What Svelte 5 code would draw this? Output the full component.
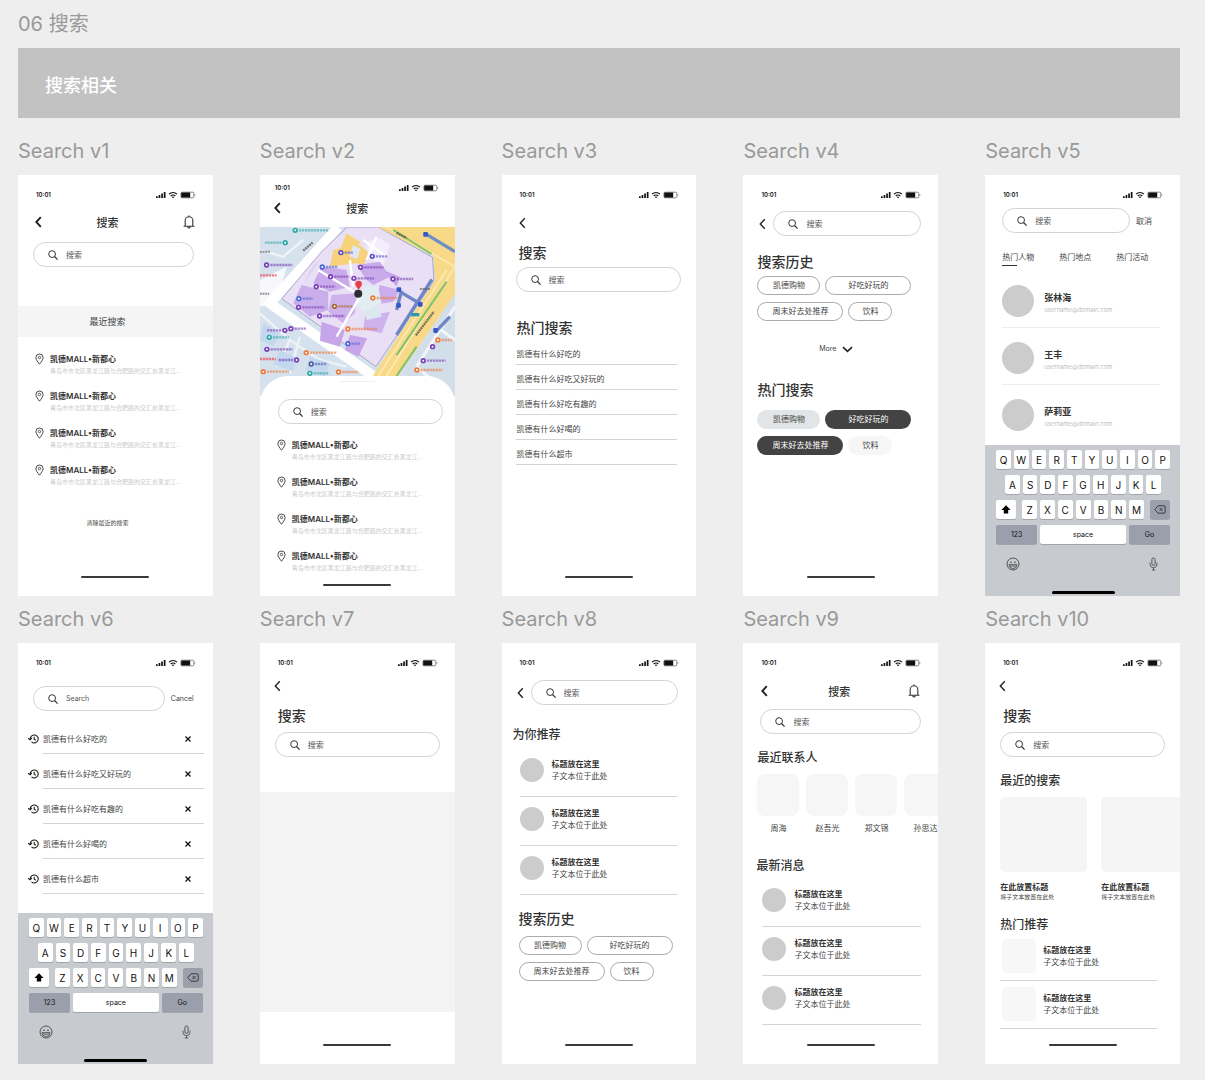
<script>
  const places = Array(4).fill({
    name: '凯德MALL•新都心',
    address: '青岛市市北区黑龙江路与合肥路的交汇处黑龙江...'
  });

  const hot = [
    '凯德有什么好吃的',
    '凯德有什么好吃又好玩的',
    '凯德有什么好吃有趣的',
    '凯德有什么好喝的',
    '凯德有什么超市'
  ];

  const tags = [
    { label: '凯德购物', size: 'mid', tone: 'grey' },
    { label: '好吃好玩的', size: 'wide', tone: 'dark' },
    { label: '周末好去处推荐', size: 'wide', tone: 'dark' },
    { label: '饮料', size: 'small', tone: 'light' }
  ];

  const people = ['张林海', '王丰', '萨莉亚'];
  const contacts = ['周海', '赵吾光', '郑文锦', '孙思达'];
  const tabs = ['热门人物', '热门地点', '热门活动'];
  const keyRows = ['QWERTYUIOP', 'ASDFGHJKL', 'ZXCVBNM'].map((row) => row.split(''));

  const purple = '#7a3fb5';
  const blue = '#4668d0';
  const orange = '#ee7a3a';
  const teal = '#2ba7a5';

  // map markers: x, y, colour, label length
  const pois = [
    [136, 181, teal, 90], [106, 218, teal, -50], [50, 285, purple, 66], [273, 248, '#5a50c8', 26],
    [367, 259, '#5a50c8', 34], [217, 291, blue, 34], [332, 292, purple, 58], [242, 320, purple, 46],
    [312, 325, purple, 50], [429, 327, purple, 50], [199, 350, purple, 46], [147, 386, blue, 30],
    [369, 384, orange, 64], [146, 412, purple, 66], [254, 409, '#a8651f', 44], [209, 438, purple, 64],
    [105, 481, purple, -44], [123, 476, purple, 36], [294, 477, orange, 76], [58, 502, teal, 48],
    [294, 521, blue, 26], [51, 538, purple, 66], [169, 548, orange, 80], [140, 570, purple, -44],
    [184, 582, '#4c5da8', 36], [40, 605, orange, 66], [180, 610, teal, 46], [266, 606, orange, 48],
    [564, 510, orange, 32], [548, 530, purple, 0], [520, 572, purple, 56], [501, 600, orange, 66]
  ];

  let tab = $state(0);
</script>

{#snippet status()}
  <div class="status">
    <span>10:01</span>
    <svg width="40" height="8" viewBox="0 0 40 8">
      <path d="M0 5.2h1.7V7H0zM2.6 4h1.7v3H2.6zM5.2 2.6h1.7V7H5.2zM7.8 1h1.7v6H7.8z" fill="#111" />
      <path d="M13 3.2a5.6 5.6 0 0 1 8 0M14.7 5a3.2 3.2 0 0 1 4.6 0" fill="none" stroke="#111" stroke-width="1.2" />
      <path d="M15.8 6 17 7.3 18.2 6a1.8 1.8 0 0 0-2.4 0z" fill="#111" />
      <rect x="24.9" y="1.2" width="12.9" height="5.6" rx="1.2" fill="none" stroke="#555" stroke-width=".7" />
      <rect x="25.2" y="1.5" width="9" height="5" rx=".6" fill="#111" />
      <path d="M38.6 3v2a1.2 1.2 0 0 0 0-2z" fill="#555" />
    </svg>
  </div>
{/snippet}

{#snippet back(bold = false)}
  <button class="icon-btn" aria-label="返回">
    <svg width="7" height="12" viewBox="0 0 7 12">
      <path d="M5.8 1.2 1.3 6l4.5 4.8" fill="none" stroke="#222" stroke-width={bold ? 1.9 : 1.4} />
    </svg>
  </button>
{/snippet}

{#snippet bell()}
  <button class="icon-btn" aria-label="通知">
    <svg width="12" height="14" viewBox="0 0 12 14">
      <path d="M1 11.2h10M2.2 11V5.6a3.8 3.8 0 0 1 7.6 0V11M4.9 12.2a1.2 1.2 0 0 0 2.2 0M6 .8v1" fill="none" stroke="#333" stroke-width="1.1" stroke-linecap="round" />
    </svg>
  </button>
{/snippet}

{#snippet search(text = '搜索')}
  <label class="search">
    <svg width="10" height="10" viewBox="0 0 10 10">
      <circle cx="4.1" cy="4.1" r="3.4" fill="none" stroke="#333" stroke-width="1" />
      <path d="M6.5 6.5 9.6 9.6" stroke="#333" stroke-width="1.2" />
    </svg>
    <input type="text" placeholder={text} aria-label={text} />
  </label>
{/snippet}

{#snippet placeList()}
  <ul class="places">
    {#each places as place}
      <li>
        <svg width="9" height="12" viewBox="0 0 9 12">
          <path d="M4.5 11.2C3 9 .9 6.8.9 4.6a3.6 3.6 0 0 1 7.2 0c0 2.2-2.1 4.4-3.6 6.6z" fill="none" stroke="#333" stroke-width=".9" />
          <circle cx="4.5" cy="4.5" r="1.2" fill="none" stroke="#333" stroke-width=".8" />
        </svg>
        <div>
          <strong>{place.name}</strong>
          <small>{place.address}</small>
        </div>
      </li>
    {/each}
  </ul>
{/snippet}

{#snippet chips(filled = false)}
  <div class="chips">
    {#each tags as tag}
      <button class="chip {tag.size} {filled ? tag.tone : 'outline'}">{tag.label}</button>
    {/each}
  </div>
{/snippet}

{#snippet messages()}
  <ul class="messages">
    {#each Array(3) as _}
      <li>
        <span class="avatar"></span>
        <div>
          <strong>标题放在这里</strong>
          <span>子文本位于此处</span>
        </div>
      </li>
    {/each}
  </ul>
{/snippet}

{#snippet keyboard()}
  <div class="keyboard">
    <div class="keys">
      {#each keyRows[0] as key}<button class="key">{key}</button>{/each}
    </div>
    <div class="keys inset">
      {#each keyRows[1] as key}<button class="key">{key}</button>{/each}
    </div>
    <div class="keys third">
      <button class="key side" aria-label="Shift">
        <svg width="10" height="9" viewBox="0 0 10 9"><path d="M5 .3 9.6 4.9H7.2V8.4H2.8V4.9H.4z" fill="#000" /></svg>
      </button>
      <div class="keys middle">
        {#each keyRows[2] as key}<button class="key">{key}</button>{/each}
      </div>
      <button class="key side grey" aria-label="Delete">
        <svg width="12" height="9" viewBox="0 0 12 9">
          <path d="M4 .8h6a1.2 1.2 0 0 1 1.2 1.2v5A1.2 1.2 0 0 1 10 8.2H4L.8 4.5zM5.5 3l3 3M8.5 3l-3 3" fill="none" stroke="#333" stroke-width=".9" />
        </svg>
      </button>
    </div>
    <div class="keys bottom">
      <button class="key grey">123</button>
      <button class="key space">space</button>
      <button class="key grey">Go</button>
    </div>
    <div class="tools">
      <button class="icon-btn" aria-label="Emoji">
        <svg width="14" height="14" viewBox="0 0 14 14">
          <circle cx="7" cy="7" r="6" fill="none" stroke="#444" stroke-width=".9" />
          <circle cx="5" cy="5.2" r=".8" fill="#444" />
          <circle cx="9" cy="5.2" r=".8" fill="#444" />
          <path d="M3 7.6h8a4 4 0 0 1-8 0zM3.6 9.1h6.8" fill="none" stroke="#444" stroke-width=".8" />
        </svg>
      </button>
      <button class="icon-btn" aria-label="Dictate">
        <svg width="9" height="14" viewBox="0 0 9 14">
          <rect x="2.9" y="1" width="3.2" height="7.4" rx="1.6" fill="none" stroke="#444" stroke-width=".9" />
          <path d="M1 5.6v1.6a3.5 3.5 0 0 0 7 0V5.6M4.5 10.8V13M2.8 13h3.4" fill="none" stroke="#444" stroke-width=".8" />
        </svg>
      </button>
    </div>
    <div class="home"></div>
  </div>
{/snippet}

<main>
  <h1>06 搜索</h1>
  <div class="banner">搜索相关</div>

  <div class="board">
    <section>
      <h2>Search v1</h2>
      <div class="screen v1">
        {@render status()}
        <div class="nav">{@render back(true)}<h3>搜索</h3>{@render bell()}</div>
        {@render search()}
        <div class="band">最近搜索</div>
        {@render placeList()}
        <button class="clear">清除最近的搜索</button>
        <div class="home"></div>
      </div>
    </section>

    <section>
      <h2>Search v2</h2>
      <div class="screen v2">
        {@render status()}
        <div class="nav">{@render back(true)}<h3>搜索</h3><span></span></div>
        <svg class="map" viewBox="30 171 585 507" preserveAspectRatio="xMidYMid slice">
          <rect x="30" y="171" width="585" height="507" fill="#d5e2ee" />
          <path d="M30 240l70 20 60-50M30 430l90 80-40 80M150 500l-30 110M120 510l90 60 80 20" fill="none" stroke="#eef3f7" stroke-width="7" />
          <path d="M40 460l50 30-20 40-40-20zM180 560l60 20-14 40-60-20zM90 540l50 24-10 40-60-20z" fill="#c3d8ee" />
          <path d="M30 330 110 290 80 400 30 410z" fill="#f6f8fb" />
          <path d="M265 171 60 400 380 625" fill="none" stroke="#fff" stroke-width="30" />
          <path d="M292 171H385L548 262 552 332 378 590 96 386 215 245z" fill="#eae0f6" stroke="#8d86b5" stroke-width="2" />
          <path d="M180 300 215 262 160 345z" fill="#dfd0f2" />
          <path d="M385 171H615V372L445 618 440 678H340L372 612 556 330 550 258z" fill="#f8d988" />
          <path d="M615 372 450 622 440 678H615z" fill="#d2deea" />
          <path d="M615 410 500 590M560 470l55 40M500 590l70 60" stroke="#f3f6f9" stroke-width="9" fill="none" />
          <path d="M290 190 330 215 318 280 240 290 250 240 272 235z" fill="#f7d27a" />
          <path d="M330 225l28 24-18 40-36-18z" fill="#f7d27a" />
          <path d="M310 225l22 12-10 30-24-8z" fill="#dfe6f6" />
          <path d="M350 215l40-10 30 20-20 60-45-20z" fill="#f3eefb" />
          <path d="M215 290 290 300 300 350 240 365 190 340zM320 285 390 275 420 320 370 345 350 330z" fill="#c9aaea" />
          <path d="M155 345 235 365 235 420 180 440 130 400zM390 345 450 360 430 395 370 405z" fill="#caaeec" />
          <path d="M245 375 320 370 315 430 280 460 235 425zM345 440 420 425 395 490 340 478z" fill="#ceb2ee" />
          <path d="M215 455 285 480 270 530 210 512zM300 495 352 505 325 560 285 540zM400 300 450 320 440 350z" fill="#c6a6e8" />
          <path d="M345 345 385 350 395 400 340 425 320 400z" fill="#e2edf3" />
          <path d="M345 420 385 410 395 440 350 450z" fill="#dbe8f0" />
          <path d="M205 300 320 370M300 270 310 350M330 380 260 500M340 210l70 50M380 200l-30 70" fill="none" stroke="#fff" stroke-width="7" />
          <path d="M410 171 615 290M410 618 615 290M385 618 590 300" fill="none" stroke="#fbe9b8" stroke-width="5" />
          <path d="M430 180 545 252M590 335 440 555M500 530 440 618" fill="none" stroke="#7cc36a" stroke-width="6" />
          <path d="M525 190 615 245" stroke="#6d8fc4" stroke-width="10" />
          <path d="M546 328 440 495M450 365 512 402M455 362 440 420M555 488 600 440" fill="none" stroke="#6f86c6" stroke-width="10" />
          <path d="M160 242 188 218M498 496 552 425M440 188l30 16" stroke="#444" stroke-width="7" stroke-dasharray="6 2" opacity=".7" />
          <path d="M30 316h50M30 567h48" stroke="#e8505a" stroke-width="7" stroke-dasharray="7 2" opacity=".7" />
          <path d="M30 371h28M30 245h32M510 357h30" stroke="#555" stroke-width="6" stroke-dasharray="6 2" opacity=".6" />
          <path d="M484 434h24" stroke="#2b9aa8" stroke-width="10" />
          {#each [[527, 193], [447, 359], [446, 406], [511, 403], [557, 481]] as [x, y]}
            <rect x={x - 7} y={y - 7} width="14" height="14" rx="3" fill="#3558c4" />
          {/each}
          {#each pois as [x, y, color, length]}
            <path d="M{x + Math.sign(length) * 11} {y}h{length}" stroke={color} stroke-width="7" stroke-dasharray="7 2" opacity=".6" />
            <circle cx={x} cy={y} r="8" fill={color} />
            <circle cx={x} cy={y} r="3" fill="#fff" />
          {/each}
          <path d="M326 360c-4-8-10-11-10-18a10 10 0 0 1 20 0c0 7-6 10-10 18z" fill="#e8404a" />
          <circle cx="325" cy="371" r="12" fill="#2e2b33" />
        </svg>
        <div class="sheet">
          <div class="handle"></div>
          {@render search()}
          {@render placeList()}
        </div>
        <div class="home"></div>
      </div>
    </section>

    <section>
      <h2>Search v3</h2>
      <div class="screen v3">
        {@render status()}
        <div class="nav">{@render back()}</div>
        <h3 class="big">搜索</h3>
        {@render search()}
        <h3 class="big hot-title">热门搜索</h3>
        <ul class="hot">
          {#each hot as item}
            <li>{item}</li>
          {/each}
        </ul>
        <div class="home"></div>
      </div>
    </section>

    <section>
      <h2>Search v4</h2>
      <div class="screen v4">
        {@render status()}
        <div class="search-row">{@render back()}{@render search()}</div>
        <h3 class="big">搜索历史</h3>
        {@render chips()}
        <button class="more">
          More
          <svg width="11" height="7" viewBox="0 0 11 7"><path d="M1 1.2 5.5 5.4 10 1.2" fill="none" stroke="#222" stroke-width="1.6" /></svg>
        </button>
        <h3 class="big hot-title">热门搜索</h3>
        {@render chips(true)}
        <div class="home"></div>
      </div>
    </section>

    <section>
      <h2>Search v5</h2>
      <div class="screen v5">
        {@render status()}
        <div class="search-row">{@render search()}<button class="cancel">取消</button></div>
        <div class="tabs">
          {#each tabs as label, i}
            <button class:active={tab === i} onclick={() => (tab = i)}>{label}</button>
          {/each}
        </div>
        <ul class="people">
          {#each people as person}
            <li>
              <span class="avatar large"></span>
              <div>
                <strong>{person}</strong>
                <small>username@domain.com</small>
              </div>
            </li>
          {/each}
        </ul>
        {@render keyboard()}
      </div>
    </section>

    <section>
      <h2>Search v6</h2>
      <div class="screen v6">
        {@render status()}
        <div class="search-row">{@render search('Search')}<button class="cancel">Cancel</button></div>
        <ul class="recent">
          {#each hot as item}
            <li>
              <svg width="11" height="10" viewBox="0 0 11 10">
                <path d="M2.2 5a4 4 0 1 1 1.3 2.9M0 4.2l2.2 1.6 1.7-1.9M6.2 2.8v2.4l1.7 1" fill="none" stroke="#222" stroke-width="1.1" />
              </svg>
              <div>
                <span>{item}</span>
                <button class="icon-btn" aria-label="删除">
                  <svg width="6" height="6" viewBox="0 0 6 6"><path d="M.5.5l5 5M5.5.5l-5 5" stroke="#111" stroke-width="1.3" /></svg>
                </button>
              </div>
            </li>
          {/each}
        </ul>
        {@render keyboard()}
      </div>
    </section>

    <section>
      <h2>Search v7</h2>
      <div class="screen v7">
        {@render status()}
        <div class="nav">{@render back()}</div>
        <h3 class="big">搜索</h3>
        {@render search()}
        <div class="blank"></div>
        <div class="home"></div>
      </div>
    </section>

    <section>
      <h2>Search v8</h2>
      <div class="screen v8">
        {@render status()}
        <div class="search-row">{@render back()}{@render search()}</div>
        <h3 class="medium">为你推荐</h3>
        {@render messages()}
        <h3 class="big">搜索历史</h3>
        {@render chips()}
        <div class="home"></div>
      </div>
    </section>

    <section>
      <h2>Search v9</h2>
      <div class="screen v9">
        {@render status()}
        <div class="nav">{@render back(true)}<h3>搜索</h3>{@render bell()}</div>
        {@render search()}
        <h3 class="medium">最近联系人</h3>
        <ul class="contacts">
          {#each contacts as contact}
            <li><span class="tile"></span>{contact}</li>
          {/each}
        </ul>
        <h3 class="medium news">最新消息</h3>
        {@render messages()}
        <div class="home"></div>
      </div>
    </section>

    <section>
      <h2>Search v10</h2>
      <div class="screen v7 v10">
        {@render status()}
        <div class="nav">{@render back()}</div>
        <h3 class="big">搜索</h3>
        {@render search()}
        <h3 class="medium">最近的搜索</h3>
        <ul class="cards">
          {#each Array(2) as _}
            <li>
              <span class="picture"></span>
              <strong>在此放置标题</strong>
              <small>将子文本放置在此处</small>
            </li>
          {/each}
        </ul>
        <h3 class="medium picks-title">热门推荐</h3>
        <ul class="picks">
          {#each Array(2) as _}
            <li>
              <span class="thumb"></span>
              <div>
                <strong>标题放在这里</strong>
                <span>子文本位于此处</span>
              </div>
            </li>
          {/each}
        </ul>
        <div class="home"></div>
      </div>
    </section>
  </div>
</main>

<style>
  :global(body) {
    background: #eee;
  }

  main {
    padding: 9px 25px 16px 18px;
    font-family: Inter, "Noto Sans CJK SC", sans-serif;
    font-size: 8px;
    line-height: 12px;
    color: #444;
  }

  h1, h2, h3, ul {
    margin: 0;
    padding: 0;
    list-style: none;
    font-weight: 400;
  }

  button {
    padding: 0;
    border: 0;
    background: none;
    font: inherit;
    color: inherit;
    white-space: nowrap;
  }

  svg {
    display: block;
    flex: none;
  }

  strong {
    font-weight: 600;
    color: #333;
    white-space: nowrap;
  }

  small {
    white-space: nowrap;
  }

  h1, h2 {
    font-size: 20px;
    color: #999;
  }

  h1 {
    line-height: 30px;
    margin-bottom: 9px;
  }

  h2 {
    line-height: 24px;
    margin-bottom: 12px;
  }

  .banner {
    padding: 23px 27px 17px;
    margin-bottom: 21px;
    background: #c2c2c2;
    color: #fff;
    font-size: 18px;
    font-weight: 500;
    line-height: 30px;
  }

  .board {
    display: grid;
    grid-template-columns: repeat(5, minmax(0, 1fr));
    gap: 11px 47px;
  }

  .screen {
    display: flex;
    flex-direction: column;
    min-height: 421px;
    background: #fff;
    overflow: hidden;
  }

  .status {
    display: flex;
    justify-content: space-between;
    align-items: center;
    padding: 15px 17px 0 18px;
    font-size: 6px;
    font-weight: 600;
    line-height: 10px;
    color: #111;
  }

  .nav {
    display: flex;
    align-items: center;
    height: 16px;
    padding: 0 18px 0 17px;
  }

  .nav h3 {
    flex: 1;
    padding-top: 2px;
    font-size: 11px;
    font-weight: 500;
    line-height: 16px;
    text-align: center;
    color: #333;
  }

  .search {
    display: flex;
    align-items: center;
    gap: 8px;
    box-sizing: border-box;
    height: 25px;
    padding: 0 14px;
    border: 1px solid #d4d4d4;
    border-radius: 13px;
  }

  .search input {
    flex: 1;
    min-width: 0;
    padding: 0;
    border: 0;
    outline: 0;
    background: none;
    font: inherit;
  }

  .search input::placeholder {
    color: #555;
    opacity: 1;
  }

  .search-row {
    display: flex;
    align-items: center;
  }

  .search-row .search {
    flex: 1;
    min-width: 0;
  }

  .big {
    font-size: 14px;
    font-weight: 500;
    line-height: 20px;
    color: #333;
  }

  .medium {
    font-size: 12px;
    font-weight: 500;
    line-height: 16px;
    color: #333;
  }

  .home {
    width: 68px;
    height: 2px;
    margin: auto auto 18px;
    border-radius: 1px;
    background: #3a3a3a;
  }

  .places {
    display: grid;
    gap: 13px;
    padding-left: 17px;
  }

  .places li {
    display: flex;
    gap: 6px;
  }

  .places div,
  .people div,
  .messages div,
  .picks div {
    display: flex;
    flex-direction: column;
  }

  .places small {
    font-size: 6px;
    font-weight: 300;
    color: #aaa;
  }

  .chips {
    display: flex;
    flex-wrap: wrap;
    gap: 7px 5px;
  }

  .chip {
    box-sizing: border-box;
    height: 19px;
    border-radius: 10px;
    line-height: 17px;
  }

  .mid { width: 63px; }
  .wide { width: 86px; }
  .small { width: 44px; }

  .outline { border: 1px solid #aaa; }
  .grey { background: #e2e5e7; }
  .dark { background: #434343; color: #fff; }
  .light { background: #f6f6f6; }

  .avatar {
    flex: none;
    width: 24px;
    height: 24px;
    border-radius: 50%;
    background: #ccc;
  }

  .avatar.large {
    width: 32px;
    height: 32px;
  }

  .messages {
    margin: 0 19px 0 18px;
  }

  .messages li {
    display: flex;
    align-items: center;
    gap: 8px;
    padding: 10px 0 14px;
    border-bottom: 1px solid #d4d4d4;
  }

  .keyboard {
    display: flex;
    flex-direction: column;
    gap: 6px;
    box-sizing: border-box;
    height: 151px;
    margin-top: auto;
    padding: 5px 10px 2px 11px;
    background: #c7cbcf;
    color: #111;
  }

  .keys {
    display: flex;
    gap: 3px;
  }

  .inset {
    padding: 0 9px;
  }

  .third {
    gap: 6px;
  }

  .middle {
    flex: 1;
  }

  .key {
    display: flex;
    align-items: center;
    justify-content: center;
    flex: 1;
    min-width: 0;
    height: 19px;
    border-radius: 2px;
    background: #fff;
    box-shadow: 0 1px 0 #a2a5aa;
    font-size: 10px;
  }

  .key.grey {
    background: #9b9fab;
  }

  .side {
    flex: 0 0 20px;
  }

  .bottom .key {
    flex: 0 0 41px;
    font-size: 7px;
  }

  .bottom .space {
    flex: 1;
  }

  .tools {
    display: flex;
    justify-content: space-between;
    padding: 7px 12px 0 10px;
  }

  .keyboard .home {
    width: 63px;
    height: 3px;
    margin-bottom: 0;
    border-radius: 2px;
    background: #000;
  }

  .v1 .nav { margin-top: 14px; }
  .v1 h3 { padding-right: 10px; }
  .v1 .search { margin: 12px 19px 0 15px; }
  .v1 .places { margin-top: 16px; }

  .band {
    padding-right: 16px;
    margin-top: 39px;
    background: #f5f5f5;
    font-size: 9px;
    line-height: 31px;
    text-align: center;
  }

  .clear {
    margin: 29px 16px 0 0;
    font-size: 6px;
    line-height: 12px;
  }

  .v2 .status { padding: 8px 16px 0 15px; }
  .v2 .nav { margin: 7px 0 11px; padding: 0 21px 0 14px; }
  .v2 > .home { margin-bottom: 10px; }

  .map {
    width: 100%;
    height: 169px;
  }

  .sheet {
    z-index: 1;
    margin-top: -20px;
    border-radius: 28px 28px 0 0;
    background: #fff;
  }

  .handle {
    width: 36px;
    height: 1px;
    margin: 5px auto 17px;
    background: #f0f0f0;
  }

  .sheet .search { margin: 0 12px 15px 18px; }

  .v3 .nav { margin-top: 15px; }
  .v3 .big { margin: 12px 17px 0; }
  .v3 .search { margin: 4px 15px 0 14px; }
  .v3 .hot-title { margin: 26px 15px 0; }

  .hot {
    margin: 2px 19px 0 14px;
  }

  .hot li {
    padding: 8px 0 4px 1px;
    border-bottom: 1px solid #d4d4d4;
  }

  .v4 .search-row { gap: 7px; margin: 11px 17px 0 16px; }
  .v4 .big { margin: 16px 14px 4px; }
  .v4 .chips { margin-left: 14px; }
  .v4 .hot-title { margin: 25px 14px 10px; }

  .more {
    display: flex;
    align-items: center;
    justify-content: center;
    gap: 6px;
    margin: 22px 9px 0 0;
    font-size: 7px;
    line-height: 12px;
  }

  .v5 .search-row { gap: 6px; margin: 8px 28px 0 17px; }

  .tabs {
    display: flex;
    gap: 25px;
    margin: 18px 17px 19px;
  }

  .tabs button {
    padding-bottom: 3px;
    background: linear-gradient(#333, #333) no-repeat left bottom / 0 1px;
  }

  .tabs .active {
    background-size: 15px 1px;
  }

  .people {
    display: grid;
    gap: 14px;
    margin: 0 20px 0 17px;
  }

  .people li {
    display: flex;
    gap: 10px;
    padding-bottom: 10px;
    border-bottom: 1px solid #eee;
  }

  .people li:last-child {
    padding: 0;
    border: 0;
  }

  .people div {
    justify-content: flex-end;
    padding-bottom: 1px;
  }

  .people strong {
    font-size: 9px;
  }

  .people small {
    font-size: 6px;
    font-weight: 300;
    color: #aaa;
  }

  .v6 .search-row { gap: 6px; margin: 18px 19px 0 15px; }
  .v6 .search input, .v6 .cancel { font-size: 7px; }

  .recent {
    margin: 8px 9px 0 10px;
  }

  .recent li {
    display: flex;
    align-items: center;
    gap: 4px;
  }

  .recent div {
    display: flex;
    flex: 1;
    justify-content: space-between;
    align-items: center;
    padding: 14px 13px 8px 0;
    border-bottom: 1px solid #d4d4d4;
  }

  .recent li > svg {
    margin-top: 5px;
  }

  .v7 .nav { margin-top: 10px; padding-left: 14px; }
  .v7 .big { margin: 12px 18px 6px; }
  .v7 .search { margin: 0 15px; }

  .blank {
    height: 220px;
    margin-top: 35px;
    background: #f3f3f3;
  }

  .v8 .search-row { gap: 7px; margin: 12px 18px 0 15px; }
  .v8 .medium { margin: 22px 11px 5px; }
  .v8 .big { margin: 14px 17px 7px; }
  .v8 .chips { margin-left: 17px; }

  .v9 .nav { margin-top: 15px; padding: 0 18px; }
  .v9 h3 { padding-left: 2px; }
  .v9 .search { margin: 10px 17px 0; }
  .v9 .medium { margin: 16px 12px 8px; }
  .v9 .news { margin: 24px 11px 4px; }
  .v9 .messages { margin: 0 17px 0 19px; }

  .contacts {
    display: flex;
    gap: 7px;
    margin-left: 14px;
  }

  .contacts li {
    flex: none;
    width: 42px;
    text-align: center;
  }

  .tile {
    display: block;
    height: 42px;
    margin-bottom: 6px;
    border-radius: 8px;
    background: #f6f6f6;
  }

  .v10 .medium { margin: 16px 15px 8px; }
  .v10 .picks-title { margin: 16px 15px 0; }

  .cards {
    display: flex;
    gap: 14px;
    margin-left: 15px;
  }

  .cards li {
    display: flex;
    flex-direction: column;
    flex: 0 0 87px;
  }

  .picture {
    height: 75px;
    margin-bottom: 9px;
    border-radius: 5px;
    background: #f5f5f5;
  }

  .cards small {
    font-size: 6px;
    line-height: 8px;
  }

  .picks {
    margin: 0 23px 0 15px;
  }

  .picks li {
    display: flex;
    align-items: center;
    gap: 7px;
    padding: 6px 0 7px 2px;
    border-bottom: 1px solid #d4d4d4;
  }

  .thumb {
    width: 34px;
    height: 34px;
    border-radius: 5px;
    background: #f7f7f7;
  }
</style>
